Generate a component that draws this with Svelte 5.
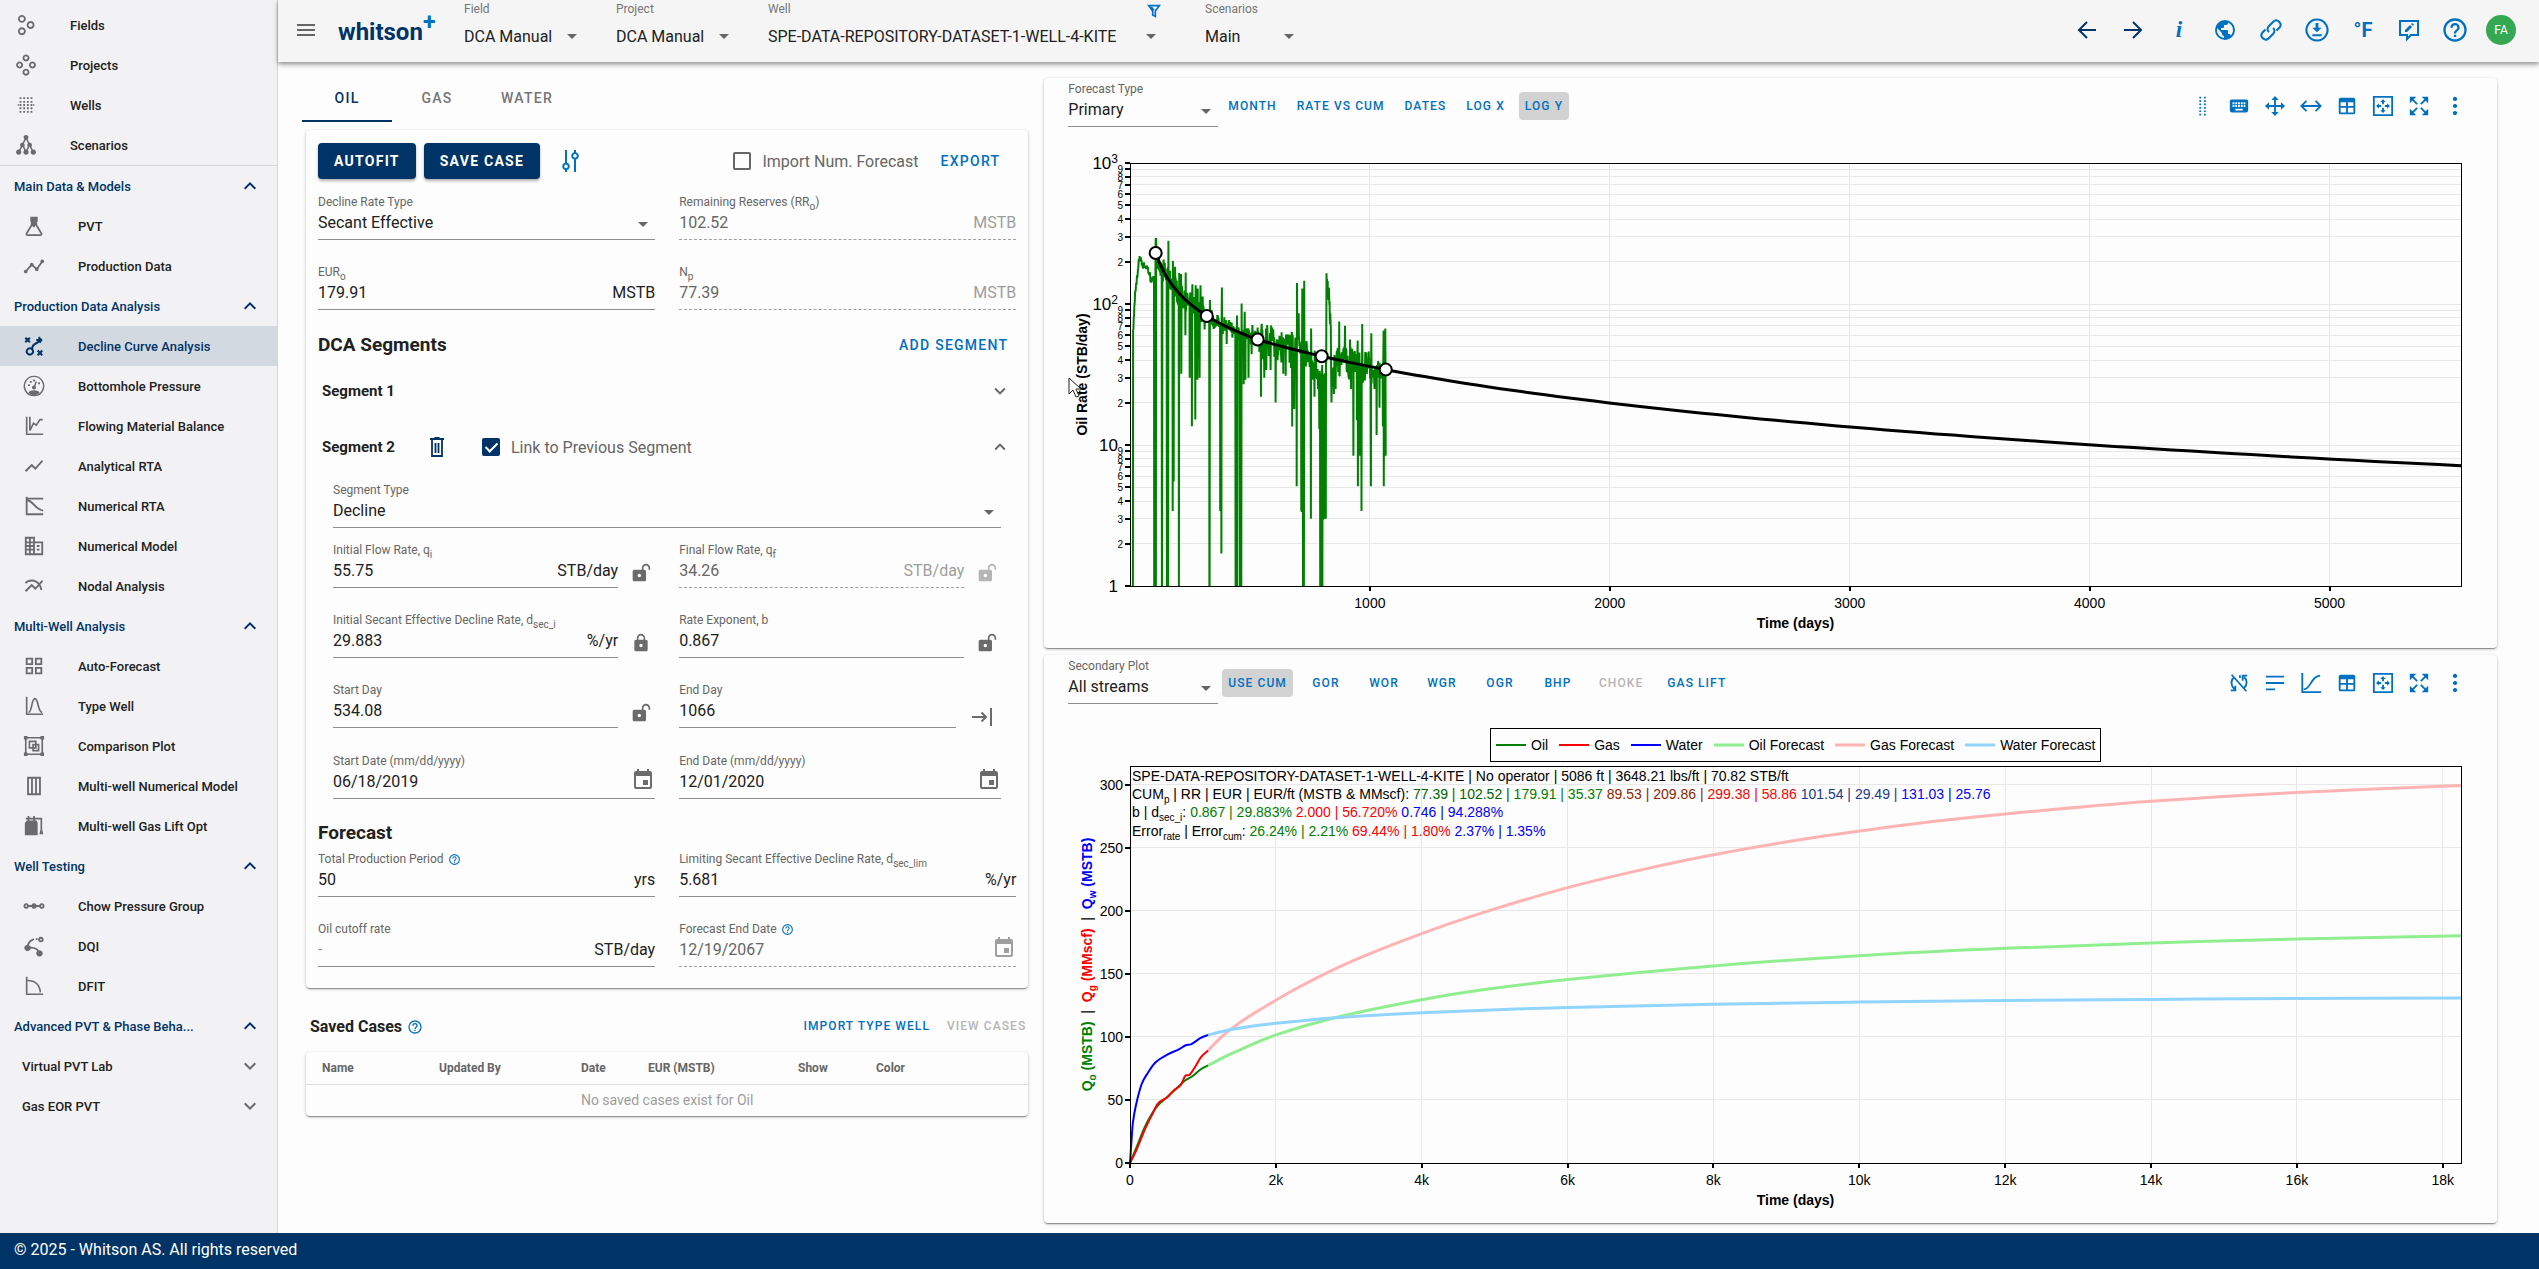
<script lang="ts">
	type Icon = { f?: string; s?: string; w?: number };
	type Field = {
		id: string;
		label: string;
		sub?: string;
		after?: string;
		value: string;
		unit?: string;
		disabled?: boolean;
		help?: boolean;
		icon?: string;
	};

	const frame = 'M4 2v19h18';

	const icons: Record<string, Icon> = {
		menu: { f: 'M3 6h18v2H3zM3 11h18v2H3zM3 16h18v2H3z' },
		up: { f: 'M7.41 15.41 12 10.83l4.59 4.58L18 14l-6-6-6 6z' },
		down: { f: 'M7.41 8.59 12 13.17l4.59-4.58L18 10l-6 6-6-6z' },
		caret: { f: 'M7 10l5 5 5-5z' },
		fields: { s: 'M7.5 2a3.3 3.3 0 1 0 .01 0M17 8.700a3.300 3.300 0 1 0 .01 0M7.500 15.500a3.300 3.300 0 1 0 .01 0', w: 2 },
		projects: { s: 'M12 1.500a2.800 2.800 0 1 0 .01 0M5 9.200a2.800 2.800 0 1 0 .01 0M19 9.200a2.800 2.800 0 1 0 .01 0M12 17a2.800 2.800 0 1 0 .01 0', w: 2 },
		wells: { s: 'M5 4.500h2m2 0h2m2 0h2m2 0h2M5 8.500h2m2 0h2m2 0h2m2 0h2M3 12h1m1 0h2m2 0h2m2 0h2m2 0h2m1 0h1M5 15.500h2m2 0h2m2 0h2m2 0h2M5 19.500h2m2 0h2m2 0h2m2 0h2', w: 2 },
		scenarios: {
			f: 'M12 1a2.600 2.600 0 1 0 .01 0M8 9.500a2.500 2.500 0 1 0 .01 0M16 9.500a2.500 2.500 0 1 0 .01 0M4 17a2.800 2.800 0 1 0 .01 0M12 17a2.800 2.800 0 1 0 .01 0M20 17a2.800 2.800 0 1 0 .01 0',
			s: 'M12 4 4 20M12 4l8 16M8.500 12 12 20M15.500 12 12 20',
			w: 1.6
		},
		pvt: { f: 'M8 2h8v5l-1 1h-.5v2L12 14l-3-3V8L8 7z', s: 'M9.500 8v3L4 20c-.4 1 0 2 1.200 2h13.600c1.200 0 1.600-1 1.200-2l-5.500-9V8', w: 2 },
		production: {
			f: 'M3 16a2 2 0 1 0 .01 0M9.500 8.500a2 2 0 1 0 .01 0M15 13.500a2 2 0 1 0 .01 0M21 5a2 2 0 1 0 .01 0',
			s: 'M3 18l6.500-7.500 5.500 5L21 7',
			w: 2
		},
		decline: {
			s: 'M2.500 3l5 5M7.500 3l-5 5M16 17l5 5M21 17l-5 5M7.500 14.500a3.500 3.500 0 1 0 .01 0M10 15.500c0-4 1-5 3.500-6s4-2 4.500-4M14.500 5.500h5.500M17 2.500l3 3-2 3',
			w: 2.200
		},
		gauge: {
			s: 'M12 1.500a10.500 10.500 0 1 0 .01 0M12 14l2.500-7',
			f: 'M6 19c2-3 10-3 12 0-3 4-9 4-12 0M12 11.500a2.200 2.200 0 1 0 .01 0M5.500 10h2v2h-2zM7.500 6.500h2v2h-2zM11 5h2v2h-2zM16.500 8h2v2h-2z',
			w: 1.600
		},
		fmb: { s: frame + 'M7.500 2v15M7.500 17l4-8 3 2 4-6h3', w: 1.800 },
		analytical: { f: 'M3.500 18.490l6-6.010 4 4L22 6.920l-1.410-1.410-7.090 7.970-4-4L2 16.990z' },
		numrta: { s: frame + 'M4 4h18M5 6c6 0 8 10 17 11', w: 2 },
		nummodel: { s: 'M3 3h9v18H3zM12 8h9v13h-9M3 8h9M3 12h9M3 16h9M7.500 3v18M15 12h3M15 16h3', w: 2 },
		nodal: {
			f: 'M22 6.920l-1.410-1.410-2.850 3.210C15.680 6.400 12.830 5 9.610 5 6.720 5 4.070 6.160 2 8l1.420 1.420C5.120 7.930 7.270 7 9.610 7c2.740 0 5.090 1.260 6.770 3.240l-2.880 3.240-4-4L2 16.990l1.500 1.500 6-6.010 4 4 4.050-4.550c.75 1.350 1.250 2.900 1.440 4.550H21c-.22-2.300-.95-4.390-2.040-6.140z'
		},
		auto: { s: 'M4 4h6v6H4zM14 4h6v6h-6zM4 14h6v6H4zM14 14h6v6h-6z', w: 2 },
		typewell: { s: frame + 'M6 19c4 0 3-15 7-15s3 15 8 15', w: 1.800 },
		comparison: { s: 'M3 3h18v18H3zM7 7h7v7H7zM11 10.500h6v6.500h-6z', f: 'M1 1h4v4H1zM19 1h4v4h-4zM1 19h4v4H1zM19 19h4v4h-4z', w: 1.800 },
		multinum: { s: 'M5.500 3h13v18h-13zM9.800 3v18M14.200 3v18', w: 2 },
		gaslift: { f: 'M2 9l2-3h11l1 3v13H2zM5 1h2v5H5zM11 1h2v5h-2z', s: 'M3 4h17v14M20 16l-1 4h2z', w: 1.800 },
		chow: { f: 'M12 9a3 3 0 1 0 .01 0', s: 'M3.500 10a2 2 0 1 0 .01 0M20.500 10a2 2 0 1 0 .01 0M5.500 12h13', w: 2 },
		dqi: { f: 'M5 10.500a3.500 3.500 0 1 0 .01 0M18 16.500a3.500 3.500 0 1 0 .01 0', s: 'M19.500 3a2 2 0 1 0 .01 0M5 12c1-4 4-6.500 7-7.500M14 4.500h2M6 14c7-1 10 1 12 6', w: 2 },
		dfit: { s: frame + 'M5 6c8 0 13 4 14 13', w: 1.800 },
		tune: { s: 'M8 1v13M8 14.500a2.800 2.800 0 1 0 .01 0M8 20v3M17 23V10M17 4a2.800 2.800 0 1 0 .01 0M17 1v3', w: 2 },
		trash: { f: 'M5 3h4l1-1h4l1 1h4v2H5z', s: 'M7 5v16h10V5M10.500 8v10M13.500 8v10', w: 1.800 },
		lock: {
			f: 'M12 17a2 2 0 0 0 2-2 2 2 0 0 0-2-2 2 2 0 0 0-2 2 2 2 0 0 0 2 2m6-9a2 2 0 0 1 2 2v10a2 2 0 0 1-2 2H6a2 2 0 0 1-2-2V10a2 2 0 0 1 2-2h1V6a5 5 0 0 1 5-5 5 5 0 0 1 5 5v2h1m-6-5a3 3 0 0 0-3 3v2h6V6a3 3 0 0 0-3-3Z'
		},
		unlock: {
			f: 'M18 1c-2.760 0-5 2.240-5 5v2H4c-1.100 0-2 .9-2 2v10c0 1.100.9 2 2 2h12c1.100 0 2-.9 2-2V10c0-1.100-.9-2-2-2h-1V6c0-1.660 1.340-3 3-3s3 1.340 3 3v2h2V6c0-2.760-2.240-5-5-5m-8 12c1.100 0 2 .9 2 2s-.9 2-2 2-2-.9-2-2 .9-2 2-2Z'
		},
		toend: { s: 'M1 12h14M10.500 7.500 15 12l-4.500 4.500M20 3v18', w: 2 },
		calendar: {
			f: 'M19 19H5V8h14m-3-7v2H8V1H6v2H5c-1.110 0-2 .89-2 2v14a2 2 0 0 0 2 2h14a2 2 0 0 0 2-2V5a2 2 0 0 0-2-2h-1V1m-1 11h-5v5h5v-5Z'
		},
		help: {
			f: 'M11 18h2v-2h-2v2m1-16A10 10 0 0 0 2 12a10 10 0 0 0 10 10 10 10 0 0 0 10-10A10 10 0 0 0 12 2m0 18c-4.410 0-8-3.590-8-8s3.590-8 8-8 8 3.590 8 8-3.590 8-8 8m0-14a4 4 0 0 0-4 4h2a2 2 0 0 1 2-2 2 2 0 0 1 2 2c0 2-3 1.750-3 5h2c0-2.250 3-2.500 3-5a4 4 0 0 0-4-4Z'
		},
		filter: { s: 'M4 4h16l-6 8v8l-4-2v-6zM8 6l4 5', w: 2.500 },
		back: { s: 'M21 12H4M12 4l-8 8 8 8', w: 2 },
		forward: { s: 'M3 12h17M12 4l8 8-8 8', w: 2 },
		globe: {
			f: 'M17.900 17.390C17.640 16.590 16.890 16 16 16h-1v-3a1 1 0 0 0-1-1H8v-2h2a1 1 0 0 0 1-1V7h2a2 2 0 0 0 2-2v-.41C17.930 5.770 20 8.640 20 12c0 2.080-.8 3.970-2.100 5.390M11 19.930C7.050 19.440 4 16.080 4 12c0-.62.08-1.220.21-1.790L9 15v1a2 2 0 0 0 2 2m1-16A10 10 0 0 0 2 12a10 10 0 0 0 10 10 10 10 0 0 0 10-10A10 10 0 0 0 12 2Z'
		},
		link: { s: 'M10 14c-2-1.500-2-4 0-6l4.500-4.500c3.500-3.500 9.500 2 6 6L17.500 12.500M14 10c2 1.500 2 4 0 6l-4.500 4.500c-3.500 3.500-9.500-2-6-6L6.500 11.500', w: 2 },
		download: { s: 'M12 3a9 9 0 1 0 .01 0M8 16.500h8', f: 'M10.800 6h2.400V10h2.800l-4 4-4-4h2.800z', w: 1.800 },
		feedback: { s: 'M3 3h18v14h-7l-4 4v-4H3z', f: 'M8 14v-2l5-5 2 2-5 5zM14 6l1.200-1 1.800 1.800-1 1.200z', w: 2 },
		drag: { s: 'M9 2v1.800m0 1.900v1.800m0 1.900v1.800m0 1.900v1.800m0 1.900v1.800m0 1.900v1.800M14 2v1.800m0 1.900v1.800m0 1.900v1.800m0 1.900v1.800m0 1.900v1.800m0 1.900v1.800', w: 2 },
		keyboard: {
			f: 'M19 10h-2V8h2m0 5h-2v-2h2m-3-1h-2V8h2m0 5h-2v-2h2m0 6H8v-2h8m-9-5H5V8h2m0 5H5v-2h2m1 0h2v2H8m0-5h2v2H8m3 1h2v2h-2m0-5h2v2h-2m9-5H4c-1.110 0-2 .89-2 2v10a2 2 0 0 0 2 2h16a2 2 0 0 0 2-2V7c0-1.110-.9-2-2-2Z'
		},
		move: { s: 'M12 3v18M3 12h18', f: 'M12 1l4 4.500H8zM12 23l4-4.500H8zM1 12l4.500-4v8zM23 12l-4.500-4v8z', w: 2 },
		wide: { s: 'M2 12h20M7 6.500 1.500 12 7 17.500M17 6.500l5.500 5.500-5.500 5.500', w: 2 },
		table: {
			f: 'M5 3h14a2 2 0 0 1 2 2v14a2 2 0 0 1-2 2H5a2 2 0 0 1-2-2V5a2 2 0 0 1 2-2m0 5v4h6V8H5m8 0v4h6V8h-6m-8 6v5h6v-5H5m8 0v5h6v-5h-6Z'
		},
		fit: { s: 'M2 2h20v20H2zM12 6v4M12 14v4M6 12h4M14 12h4', f: 'M12 4.500l3 3H9zM12 19.500l3-3H9zM4.500 12l3-3v6zM19.500 12l-3-3v6z', w: 2 },
		expand: { s: 'M4 4l6 6M20 4l-6 6M4 20l6-6M20 20l-6-6', f: 'M2 2h7L2 9zM22 2h-7l7 7zM2 22h7l-7-7zM22 22h-7l7-7z', w: 2 },
		dots: { f: 'M12 2a2.300 2.300 0 1 0 .01 0M12 9.700a2.300 2.300 0 1 0 .01 0M12 17.400a2.300 2.300 0 1 0 .01 0' },
		syncoff: { s: 'M4 3l16 18M6.500 6C2.500 9 3 15 7 18.500M3 20h5v-5M17.500 17.500c4-4 3.500-9 0-12M21 4h-5v5.500M13 3.500v3', w: 2 },
		lines: { s: 'M2 5h20M2 12h20M2 19h10', w: 2 },
		curve: { s: 'M2.500 1v21H23M4 19c8 0 8-15 18-15', w: 2 }
	};

	const topLinks = [
		['fields', 'Fields'],
		['projects', 'Projects'],
		['wells', 'Wells'],
		['scenarios', 'Scenarios']
	];

	const sections = [
		{ title: 'Main Data & Models', items: [['pvt', 'PVT'], ['production', 'Production Data']] },
		{
			title: 'Production Data Analysis',
			items: [
				['decline', 'Decline Curve Analysis'],
				['gauge', 'Bottomhole Pressure'],
				['fmb', 'Flowing Material Balance'],
				['analytical', 'Analytical RTA'],
				['numrta', 'Numerical RTA'],
				['nummodel', 'Numerical Model'],
				['nodal', 'Nodal Analysis']
			]
		},
		{
			title: 'Multi-Well Analysis',
			items: [
				['auto', 'Auto-Forecast'],
				['typewell', 'Type Well'],
				['comparison', 'Comparison Plot'],
				['multinum', 'Multi-well Numerical Model'],
				['gaslift', 'Multi-well Gas Lift Opt']
			]
		},
		{ title: 'Well Testing', items: [['chow', 'Chow Pressure Group'], ['dqi', 'DQI'], ['dfit', 'DFIT']] },
		{ title: 'Advanced PVT & Phase Beha...', items: [] }
	];

	const headerSelects = [
		{ id: 'h-field', label: 'Field', value: 'DCA Manual', size: 'normal' },
		{ id: 'h-project', label: 'Project', value: 'DCA Manual', size: 'normal' },
		{ id: 'h-well', label: 'Well', value: 'SPE-DATA-REPOSITORY-DATASET-1-WELL-4-KITE', size: 'long' },
		{ id: 'h-scenario', label: 'Scenarios', value: 'Main', size: 'short' }
	];

	const reserves: Field[] = [
		{ id: 'rr', label: 'Remaining Reserves (RR', sub: 'o', after: ')', value: '102.52', unit: 'MSTB', disabled: true },
		{ id: 'eur', label: 'EUR', sub: 'o', value: '179.91', unit: 'MSTB' },
		{ id: 'np', label: 'N', sub: 'p', value: '77.39', unit: 'MSTB', disabled: true }
	];

	const segmentFields: Field[] = [
		{ id: 'qi', label: 'Initial Flow Rate, q', sub: 'i', value: '55.75', unit: 'STB/day', icon: 'unlock' },
		{ id: 'qf', label: 'Final Flow Rate, q', sub: 'f', value: '34.26', unit: 'STB/day', icon: 'unlock', disabled: true },
		{ id: 'dsec', label: 'Initial Secant Effective Decline Rate, d', sub: 'sec_i', value: '29.883', unit: '%/yr', icon: 'lock' },
		{ id: 'b', label: 'Rate Exponent, b', value: '0.867', icon: 'unlock' },
		{ id: 'start', label: 'Start Day', value: '534.08', icon: 'unlock' },
		{ id: 'end', label: 'End Day', value: '1066', icon: 'toend' },
		{ id: 'startdate', label: 'Start Date (mm/dd/yyyy)', value: '06/18/2019', icon: 'calendar' },
		{ id: 'enddate', label: 'End Date (mm/dd/yyyy)', value: '12/01/2020', icon: 'calendar' }
	];

	const forecastFields: Field[] = [
		{ id: 'period', label: 'Total Production Period', value: '50', unit: 'yrs', help: true },
		{ id: 'dlim', label: 'Limiting Secant Effective Decline Rate, d', sub: 'sec_lim', value: '5.681', unit: '%/yr' },
		{ id: 'cutoff', label: 'Oil cutoff rate', value: '', unit: 'STB/day' },
		{ id: 'endforecast', label: 'Forecast End Date', value: '12/19/2067', help: true, icon: 'calendar', disabled: true }
	];

	const rateButtons = ['MONTH', 'RATE VS CUM', 'DATES', 'LOG X', 'LOG Y'];
	const streamButtons = ['USE CUM', 'GOR', 'WOR', 'WGR', 'OGR', 'BHP', 'CHOKE', 'GAS LIFT'];
	const rateTools = ['drag', 'keyboard', 'move', 'wide', 'table', 'fit', 'expand', 'dots'];
	const streamTools = ['syncoff', 'lines', 'curve', 'table', 'fit', 'expand', 'dots'];

	let chartWidth = $state(1453);
	let linked = $state(true);
	let importNum = $state(false);

	const left = 86;
	let right = $derived(chartWidth - 36);

	// primary plot: log rate vs time
	const top1 = 28;
	const bottom1 = 451;
	const x1 = (day: number) => left + (day / 5548) * (right - left);
	const y1 = (rate: number) => bottom1 - (Math.log10(Math.max(rate, 1)) / 3) * (bottom1 - top1);

	function arps(day: number) {
		if (day < 534) return 230 / Math.pow(1 + 0.01724 * (day - 107), 1 / 1.5);
		return 55.75 / Math.pow(1 + 0.000987 * (day - 534), 1 / 0.867);
	}

	const startup = [[12, 1], [13, 63], [22, 119], [33, 165], [38, 205], [44, 215], [50, 199], [67, 184], [78, 162], [99, 145], [107, 150]];

	const shutins = [101, 102, 108, 133, 134, 154, 156, 159, 204, 331, 332, 440, 442, 444, 447, 458, 460, 464, 721, 723, 725, 793, 795, 797, 799, 802];

	const outliers: Record<number, number> = {
		107: 294, 109: 294, 160: 281, 178: 3.4, 179: 202, 182: 5.5, 188: 184, 205: 166, 213: 163, 214: 32,
		231: 60, 232: 167, 249: 30, 251: 119, 258: 13.6, 260: 138, 272: 15.2, 274: 136, 281: 29,
		282: 129, 290: 30, 294: 136, 303: 113, 311: 66, 333: 107, 376: 3.4, 378: 3.4, 381: 1.7, 383: 131, 403: 52,
		446: 83, 465: 101, 474: 27, 478: 88, 481: 29, 494: 30, 507: 44, 510: 71, 546: 22, 560: 30, 568: 34,
		586: 34, 597: 66, 607: 20, 615: 40, 632: 63, 639: 32, 649: 31, 668: 60, 676: 13.5, 685: 18,
		689: 58, 695: 5.1, 696: 141, 703: 86, 714: 3.4, 715: 3.4, 718: 129, 726: 146, 754: 3, 755: 67, 762: 29,
		769: 22, 789: 13, 801: 37, 807: 3, 808: 3, 810: 27, 812: 3, 814: 3, 816: 3, 819: 165, 826: 118, 835: 86,
		840: 20, 850: 23, 857: 25, 868: 33, 872: 75, 896: 70, 917: 56, 921: 25, 931: 8.4, 946: 15,
		949: 55, 950: 5.1, 958: 8.4, 960: 8.4, 965: 3.4, 968: 72, 1004: 5.1, 1006: 62, 1019: 25, 1028: 11.8,
		1040: 18.4, 1054: 13.5, 1057: 65, 1058: 5.1, 1062: 8.4, 1064: 67, 1066: 8.4
	};

	function trend(day: number) {
		if (day < 107) {
			const i = startup.findIndex((p) => p[0] > day);
			const [a, b] = [startup[i - 1], startup[i]];
			return a[1] + ((b[1] - a[1]) * (day - a[0])) / (b[0] - a[0]);
		}
		if (day > 755 && day < 817) return 42 - (day - 755) * 0.28;
		if (day > 696 && day < 712) return 80 - (day - 696) * 2;
		if (day > 818 && day < 838) return 150 - (day - 818) * 4.5;
		if (day > 838 && day < 866) return 30 + (day - 838) * 0.3;
		return arps(day);
	}

	let seed = 7;
	function noise() {
		seed = (seed * 16807) % 2147483647;
		return (seed / 2147483647) * 2 - 1;
	}

	const history: number[][] = [];
	let drift = 0;
	for (let day = 12; day <= 1066; day++) {
		const spread = day < 107 ? 0.05 : day < 300 ? 0.16 : day < 520 ? 0.11 : 0.14;
		if (day % 7 === 0) drift = day < 520 ? noise() * 0.05 : noise() * 0.18;
		let rate = trend(day) * Math.exp(drift + noise() * spread);
		if (outliers[day]) rate = outliers[day];
		if (day === 12 || shutins.includes(day)) rate = 1;
		history.push([day, rate]);
	}

	const fitDays = Array.from({ length: 120 }, (_, i) => 107 + (5548 - 107) * Math.pow(i / 119, 2));
	const handles = [107, 320, 532, 799, 1066];

	const decades = [1, 10, 100];
	const logTicks = decades.flatMap((d) => [2, 3, 4, 5, 6, 7, 8, 9].map((n) => [n, n * d]));

	const line = (pts: number[][], x: (n: number) => number, y: (n: number) => number) =>
		pts.map((p, i) => (i ? 'L' : 'M') + x(p[0]).toFixed(1) + ' ' + y(p[1]).toFixed(1)).join('');

	// secondary plot: cumulatives
	const top2 = 4;
	const bottom2 = 401;
	const x2 = (day: number) => left + (day / 18250) * (right - left);
	const y2 = (cum: number) => bottom2 - (cum / 315) * (bottom2 - top2);

	const streams = [
		{
			name: 'Gas Forecast', color: '#ffb3b3', width: 3,
			points: [[1069, 89.2], [1262, 100.4], [1494, 111], [1826, 123.2], [2357, 140.8], [3022, 159.6], [4000, 182], [4914, 200], [6000, 218.5], [7039, 233], [8000, 244.6], [9184, 256.5], [10000, 263.4], [10960, 270.6], [12000, 277], [14000, 287], [16000, 294], [18250, 299.5]]
		},
		{
			name: 'Oil Forecast', color: '#90ee90', width: 3,
			points: [[1069, 77.4], [1428, 87.7], [2000, 101.6], [2822, 115.5], [4000, 129.6], [4914, 138], [6000, 145.6], [8000, 156.4], [10000, 164.5], [12000, 170.3], [14000, 174.5], [16000, 177.7], [18250, 180.3]]
		},
		{
			name: 'Water Forecast', color: '#90d5ff', width: 3,
			points: [[1069, 101.5], [1428, 106.3], [2000, 110.8], [2822, 115.3], [4000, 119.3], [6000, 123.4], [8000, 126], [10000, 127.7], [12000, 129], [14000, 129.8], [16000, 130.5], [18250, 131]]
		},
		{
			name: 'Oil', color: '#008000', width: 2,
			points: [[0, 0], [86, 12], [199, 28], [290, 38], [385, 45.8], [531, 53.4], [697, 62.5], [757, 65.5], [860, 69], [976, 74.6], [1069, 77.4]]
		},
		{
			name: 'Gas', color: '#ff0000', width: 2,
			points: [[0, 0], [86, 10], [199, 26], [300, 38], [385, 47.3], [511, 52.2], [600, 57.5], [697, 62], [757, 69.2], [817, 70], [900, 77], [976, 84.3], [1069, 89.2]]
		},
		{
			name: 'Water', color: '#0000ff', width: 2,
			points: [[0, 0], [20, 17], [40, 32], [80, 45.5], [159, 62.5], [246, 71.6], [352, 80], [511, 86], [664, 90], [764, 93.4], [843, 94.4], [970, 99.2], [1069, 101.6]]
		}
	];
	const legend = ['Oil', 'Gas', 'Water', 'Oil Forecast', 'Gas Forecast', 'Water Forecast'].map(
		(n) => streams.find((s) => s.name === n)!
	);

	function smooth(pts: number[][]) {
		const p = pts.map((q) => [x2(q[0]), y2(q[1])]);
		let d = `M${p[0][0]} ${p[0][1]}`;
		for (let i = 0; i < p.length - 1; i++) {
			const a = p[i - 1] ?? p[i];
			const b = p[i];
			const c = p[i + 1];
			const e = p[i + 2] ?? c;
			d += `C${b[0] + (c[0] - a[0]) / 6} ${b[1] + (c[1] - a[1]) / 6} ${c[0] - (e[0] - b[0]) / 6} ${c[1] - (e[1] - b[1]) / 6} ${c[0]} ${c[1]}`;
		}
		return d;
	}
</script>

{#snippet icon(name: string, size = 24)}
	<svg class="icon" viewBox="0 0 24 24" width={size} height={size} aria-hidden="true">
		{#if icons[name].s}
			<path d={icons[name].s} fill="none" stroke="currentColor" stroke-width={icons[name].w} />
		{/if}
		{#if icons[name].f}
			<path d={icons[name].f} fill="currentColor" />
		{/if}
	</svg>
{/snippet}

{#snippet selectField(id: string, label: string, value: string)}
	<div class="field">
		<label for={id}>{label}</label>
		<div class="control">
			<select {id}><option>{value}</option></select>
			<span class="caret">{@render icon('caret')}</span>
		</div>
	</div>
{/snippet}

{#snippet textField(f: Field)}
	<div class="field-row">
		<div class="field" class:disabled={f.disabled}>
			<label for={f.id}>
				{f.label}{#if f.sub}<sub>{f.sub}</sub>{/if}{f.after ?? ''}
				{#if f.help}<span class="help">{@render icon('help', 13)}</span>{/if}
			</label>
			<div class="control">
				<input id={f.id} type="text" value={f.value} placeholder="-" disabled={f.disabled} />
				{#if f.unit}<span class="unit">{f.unit}</span>{/if}
				{#if f.icon === 'calendar'}
					<button class="calendar" aria-label="Pick date">{@render icon('calendar')}</button>
				{/if}
			</div>
		</div>
		{#if f.icon && f.icon !== 'calendar'}
			<button class="lock" class:wide={f.icon === 'toend'} disabled={f.disabled} aria-label={f.icon}>
				{@render icon(f.icon, f.icon === 'toend' ? 24 : 20)}
			</button>
		{/if}
	</div>
{/snippet}

{#snippet tools(names: string[])}
	<div class="tools">
		{#each names as name}
			<button aria-label={name}>{@render icon(name, 22)}</button>
		{/each}
	</div>
{/snippet}

<div class="app">
	<div class="body">
		<nav class="sidebar">
			<div class="top-links">
				{#each topLinks as [glyph, text]}
					<a href="#{glyph}"><span class="glyph">{@render icon(glyph, 22)}</span>{text}</a>
				{/each}
			</div>
			{#each sections as section}
				<button class="section">
					<span>{section.title}</span>
					{@render icon('up', 24)}
				</button>
				{#each section.items as [glyph, text]}
					<a class="sub-link" class:active={glyph === 'decline'} href="#{glyph}">
						<span class="glyph">{@render icon(glyph, 22)}</span>{text}
					</a>
				{/each}
			{/each}
			<button class="section nested"><span>Virtual PVT Lab</span>{@render icon('down', 24)}</button>
			<button class="section nested"><span>Gas EOR PVT</span>{@render icon('down', 24)}</button>
		</nav>

		<div class="page">
			<header>
				<button class="burger" aria-label="Menu">{@render icon('menu')}</button>
				<a class="logo" href="#home">whitson<sup>+</sup></a>
				{#each headerSelects as s}
					<div class="picker {s.size}">
						<label for={s.id}>{s.label}</label>
						<select id={s.id}><option>{s.value}</option></select>
						<span class="caret">{@render icon('caret')}</span>
						{#if s.size === 'long'}
							<button class="filter" aria-label="Filter">{@render icon('filter', 16)}</button>
						{/if}
					</div>
				{/each}
				<div class="actions">
					<button class="dark" aria-label="Back">{@render icon('back')}</button>
					<button class="dark" aria-label="Forward">{@render icon('forward')}</button>
					<button class="info">i</button>
					<button aria-label="Language">{@render icon('globe')}</button>
					<button aria-label="Copy link">{@render icon('link')}</button>
					<button aria-label="Download">{@render icon('download', 28)}</button>
					<button class="unit-toggle">°F</button>
					<button aria-label="Feedback">{@render icon('feedback')}</button>
					<button aria-label="Help">{@render icon('help', 28)}</button>
					<button><span class="avatar">FA</span></button>
				</div>
			</header>

			<main>
				<div class="inputs">
					<div class="tabs" role="tablist">
						<button role="tab" aria-selected="true" class="selected">OIL</button>
						<button role="tab" aria-selected="false">GAS</button>
						<button role="tab" aria-selected="false">WATER</button>
					</div>

					<section class="card form">
						<div class="toolbar">
							<button class="primary">AUTOFIT</button>
							<button class="primary">SAVE CASE</button>
							<button class="tune" aria-label="Settings">{@render icon('tune')}</button>
							<label class="check">
								<input type="checkbox" bind:checked={importNum} />
								Import Num. Forecast
							</label>
							<button class="text">EXPORT</button>
						</div>

						<div class="grid">
							{@render selectField('decline-type', 'Decline Rate Type', 'Secant Effective')}
							{#each reserves as f}
								{@render textField(f)}
							{/each}
						</div>

						<div class="heading">
							<h2>DCA Segments</h2>
							<button class="text">ADD SEGMENT</button>
						</div>

						<div class="segment">
							<h3>Segment 1</h3>
							<button class="toggle" aria-label="Expand segment 1">{@render icon('down', 22)}</button>
						</div>
						<div class="segment">
							<h3>Segment 2</h3>
							<button class="trash" aria-label="Delete segment">{@render icon('trash')}</button>
							<label class="check">
								<input type="checkbox" bind:checked={linked} />
								Link to Previous Segment
							</label>
							<button class="toggle" aria-label="Collapse segment 2">{@render icon('up', 22)}</button>
						</div>

						<div class="segment-body">
							{@render selectField('segment-type', 'Segment Type', 'Decline')}
							<div class="grid">
								{#each segmentFields as f}
									{@render textField(f)}
								{/each}
							</div>
						</div>

						<h2 class="forecast-title">Forecast</h2>
						<div class="grid">
							{#each forecastFields as f}
								{@render textField(f)}
							{/each}
						</div>
					</section>

					<div class="saved">
						<h3>Saved Cases</h3>
						<span class="help">{@render icon('help', 16)}</span>
						<button class="text small">IMPORT TYPE WELL</button>
						<button class="text small" disabled>VIEW CASES</button>
					</div>
					<div class="card">
						<table>
							<thead>
								<tr>
									<th class="name">Name</th>
									<th class="by">Updated By</th>
									<th class="date">Date</th>
									<th class="eur">EUR (MSTB)</th>
									<th class="show">Show</th>
									<th>Color</th>
								</tr>
							</thead>
							<tbody>
								<tr><td colspan="6">No saved cases exist for Oil</td></tr>
							</tbody>
						</table>
					</div>
				</div>

				<div class="charts">
					<section class="card">
						<div class="chart-head">
							{@render selectField('forecast-type', 'Forecast Type', 'Primary')}
							<div class="options">
								{#each rateButtons as text}
									<button class:on={text === 'LOG Y'}>{text}</button>
								{/each}
							</div>
							{@render tools(rateTools)}
						</div>
						<div bind:clientWidth={chartWidth}>
							<svg class="chart" width={chartWidth} height="505">
								<g class="gridlines">
									{#each [1000, 2000, 3000, 4000, 5000] as t}
										<line x1={x1(t)} x2={x1(t)} y1={top1} y2={bottom1} />
									{/each}
									{#each logTicks as [, v]}
										<line x1={left} x2={right} y1={y1(v)} y2={y1(v)} />
									{/each}
									{#each [10, 100] as v}
										<line x1={left} x2={right} y1={y1(v)} y2={y1(v)} />
									{/each}
								</g>
								<g class="ticks">
									{#each [1000, 2000, 3000, 4000, 5000] as t}
										<line x1={x1(t)} x2={x1(t)} y1={bottom1} y2={bottom1 + 5} />
									{/each}
									{#each [...logTicks.map((t) => t[1]), 1, 10, 100, 1000] as v}
										<line x1={left - 5} x2={left} y1={y1(v)} y2={y1(v)} />
									{/each}
								</g>
								<path d={line(history, x1, y1)} fill="none" stroke="#008000" stroke-width="2" stroke-linejoin="bevel" />
								<path
									d={line(fitDays.map((d) => [d, arps(d)]), x1, y1)}
									fill="none"
									stroke="#000"
									stroke-width="3"
								/>
								{#each handles as day}
									<circle cx={x1(day)} cy={y1(arps(day))} r="6" fill="#fff" stroke="#000" stroke-width="2" />
								{/each}
								<rect class="frame" x={left} y={top1} width={right - left} height={bottom1 - top1} />
								{#each [1000, 2000, 3000, 4000, 5000] as t}
									<text x={x1(t)} y={bottom1 + 22} text-anchor="middle">{t}</text>
								{/each}
								{#each logTicks as [n, v]}
									<text class="minor" x={left - 7} y={y1(v) + 4} text-anchor="end">{n}</text>
								{/each}
								<g class="power">
									<text x={left - 12} y={y1(1) + 6} text-anchor="end">1</text>
									<text x={left - 12} y={y1(10) + 6} text-anchor="end">10</text>
									<text x={left - 12} y={y1(100) + 6} text-anchor="end">10<tspan class="sup" dy="-6">2</tspan></text>
									<text x={left - 12} y={y1(1000) + 6} text-anchor="end">10<tspan class="sup" dy="-6">3</tspan></text>
								</g>
								<text class="title" x={(left + right) / 2} y={bottom1 + 42} text-anchor="middle">Time (days)</text>
								<text class="title" transform="translate(43 {(top1 + bottom1) / 2}) rotate(-90)" text-anchor="middle">Oil Rate (STB/day)</text>
								<path d="M25 243v16l4-4 3 7 3-1-3-7h5z" fill="#fff" fill-opacity="0.6" stroke="#222" />
							</svg>
						</div>
					</section>

					<section class="card">
						<div class="chart-head">
							{@render selectField('secondary-plot', 'Secondary Plot', 'All streams')}
							<div class="options roomy">
								{#each streamButtons as text}
									<button class:on={text === 'USE CUM'} disabled={text === 'CHOKE'}>{text}</button>
								{/each}
							</div>
							{@render tools(streamTools)}
						</div>
						<div class="legend-wrap">
							<div class="legend">
								{#each legend as s}
									<span>
										<svg width="30" height="4"><line x2="30" y1="2" y2="2" stroke={s.color} stroke-width={s.width} /></svg>
										{s.name}
									</span>
								{/each}
							</div>
						</div>
						<svg class="chart" width={chartWidth} height="453">
							<g class="gridlines">
								{#each [2, 4, 6, 8, 10, 12, 14, 16, 18] as k}
									<line x1={x2(k * 1000)} x2={x2(k * 1000)} y1={top2} y2={bottom2} />
								{/each}
								{#each [50, 100, 150, 200, 250, 300] as v}
									<line x1={left} x2={right} y1={y2(v)} y2={y2(v)} />
								{/each}
							</g>
							<g class="ticks">
								{#each [0, 2, 4, 6, 8, 10, 12, 14, 16, 18] as k}
									<line x1={x2(k * 1000)} x2={x2(k * 1000)} y1={bottom2} y2={bottom2 + 5} />
								{/each}
								{#each [0, 50, 100, 150, 200, 250, 300] as v}
									<line x1={left - 5} x2={left} y1={y2(v)} y2={y2(v)} />
								{/each}
							</g>
							{#each streams as s}
								<path d={smooth(s.points)} fill="none" stroke={s.color} stroke-width={s.width} />
							{/each}
							<rect class="frame" x={left} y={top2} width={right - left} height={bottom2 - top2} />
							{#each [0, 2, 4, 6, 8, 10, 12, 14, 16, 18] as k}
								<text x={x2(k * 1000)} y={bottom2 + 22} text-anchor="middle">{k ? k + 'k' : 0}</text>
							{/each}
							{#each [0, 50, 100, 150, 200, 250, 300] as v}
								<text x={left - 7} y={y2(v) + 5} text-anchor="end">{v}</text>
							{/each}
							<text x={left + 2} y="19">SPE-DATA-REPOSITORY-DATASET-1-WELL-4-KITE | No operator | 5086 ft | 3648.21 lbs/ft | 70.82 STB/ft</text>
							<text x={left + 2} y="37">CUM<tspan class="sub" dy="4">p</tspan><tspan dy="-4">{' | RR | EUR | EUR/ft (MSTB & MMscf): '}</tspan><tspan class="dark-green">{'77.39 | 102.52 | '}</tspan><tspan class="green">{'179.91 | 35.37 '}</tspan><tspan class="brown">{'89.53 | 209.86 | '}</tspan><tspan class="red">{'299.38 | 58.86 '}</tspan><tspan class="navy">{'101.54 | 29.49 | '}</tspan><tspan class="blue">131.03 | 25.76</tspan></text>
							<text x={left + 2} y="55">b | d<tspan class="sub" dy="4">sec_i</tspan><tspan dy="-4">{': '}</tspan><tspan class="green">{'0.867 | 29.883% '}</tspan><tspan class="red">{'2.000 | 56.720% '}</tspan><tspan class="blue">0.746 | 94.288%</tspan></text>
							<text x={left + 2} y="74">Error<tspan class="sub" dy="4">rate</tspan><tspan dy="-4">{' | Error'}</tspan><tspan class="sub" dy="4">cum</tspan><tspan dy="-4">{': '}</tspan><tspan class="green">{'26.24% | 2.21% '}</tspan><tspan class="red">{'69.44% | 1.80% '}</tspan><tspan class="blue">2.37% | 1.35%</tspan></text>
							<text class="title" x={(left + right) / 2} y={bottom2 + 42} text-anchor="middle">Time (days)</text>
							<text class="title" transform="translate(48 {(top2 + bottom2) / 2}) rotate(-90)" text-anchor="middle"><tspan class="green">Q</tspan><tspan class="sub green" dy="4">o</tspan><tspan class="green" dy="-4">{' (MSTB)'}</tspan><tspan class="pipe">{'  |  '}</tspan><tspan class="red">Q</tspan><tspan class="sub red" dy="4">g</tspan><tspan class="red" dy="-4">{' (MMscf)'}</tspan><tspan class="pipe">{'  |  '}</tspan><tspan class="blue">Q</tspan><tspan class="sub blue" dy="4">w</tspan><tspan class="blue" dy="-4">{' (MSTB)'}</tspan></text>
						</svg>
					</section>
				</div>
			</main>
		</div>
	</div>
	<footer>© 2025 - Whitson AS. All rights reserved</footer>
</div>

<style>
	:global(body) {
		background: #fdfdfd;
	}

	.app {
		display: flex;
		flex-direction: column;
		min-height: 100vh;
		font-family: Roboto, 'Liberation Sans', sans-serif;
		font-size: 16px;
		color: #212121;
	}

	.app * {
		box-sizing: border-box;
	}

	.body {
		display: flex;
		flex: 1;
	}

	button,
	input,
	select {
		font: inherit;
		color: inherit;
		border: 0;
		padding: 0;
		margin: 0;
		background: none;
		appearance: none;
	}

	button {
		cursor: pointer;
	}

	.icon {
		display: block;
		flex: none;
	}

	a {
		color: inherit;
		text-decoration: none;
	}

	.sidebar {
		flex: none;
		width: 278px;
		background: #f2f2f5;
		border-right: 1px solid #d5d5d8;
		font-size: 13px;
		font-weight: 500;
	}

	.top-links {
		padding-top: 5px;
		border-bottom: 1px solid #d5d5d8;
	}

	.sidebar a {
		display: flex;
		align-items: center;
		height: 40px;
		padding-left: 15px;
	}

	.sidebar a.sub-link {
		padding-left: 23px;
	}

	.glyph {
		width: 55px;
		color: #6b6b6e;
	}

	.sidebar a.active,
	.active .glyph {
		background: #d3d9e1;
		color: #003366;
	}

	.section {
		display: flex;
		align-items: center;
		justify-content: space-between;
		width: 100%;
		height: 40px;
		padding: 0 15px 0 14px;
		color: #003366;
		white-space: nowrap;
	}

	.nested {
		padding-left: 22px;
		color: #212121;
	}

	.nested .icon {
		color: #6b6b6e;
	}

	.page {
		flex: 1;
		min-width: 0;
	}

	header {
		display: flex;
		align-items: center;
		height: 62px;
		padding: 0 15px 2px 16px;
		background: #f5f5f5;
		box-shadow: 0 2px 4px rgba(0, 0, 0, 0.35), 0 4px 6px rgba(0, 0, 0, 0.1);
	}

	.burger {
		color: #666;
		margin-right: 20px;
	}

	.logo {
		width: 126px;
		padding-top: 3px;
		color: #003366;
		font-size: 24px;
		font-weight: 700;
	}

	.logo sup {
		color: #0070c0;
		font-size: 23px;
		line-height: 0;
		vertical-align: 10px;
	}

	.picker {
		position: relative;
		align-self: flex-start;
		width: 120px;
		margin-right: 32px;
	}

	.picker.long {
		width: 395px;
		margin-right: 42px;
	}

	.picker.short {
		width: 96px;
	}

	.picker label {
		display: block;
		height: 20px;
		font-size: 12px;
		line-height: 18px;
		color: #757575;
	}

	.picker select {
		display: block;
		width: 100%;
		height: 32px;
	}

	.caret {
		position: absolute;
		right: 0;
		bottom: 4px;
		color: #666;
		pointer-events: none;
	}

	.filter {
		position: absolute;
		top: 3px;
		right: 1px;
		color: #0070c0;
	}

	.actions {
		display: flex;
		align-items: center;
		margin-left: auto;
		color: #0070c0;
	}

	.actions button {
		display: flex;
		align-items: center;
		justify-content: center;
		width: 46px;
		height: 46px;
	}

	.actions .dark {
		color: #003366;
	}

	.actions .info {
		font-family: 'Liberation Serif', serif;
		font-size: 23px;
		font-style: italic;
		font-weight: 700;
	}

	.actions .unit-toggle {
		font-size: 20px;
		font-weight: 700;
	}

	.avatar {
		width: 30px;
		height: 30px;
		border-radius: 50%;
		background: #34a853;
		color: #fff;
		font-size: 12px;
		line-height: 30px;
	}

	main {
		display: grid;
		grid-template-columns: minmax(0, 1fr) minmax(0, 2fr);
		gap: 16px;
		padding: 12px 42px 10px 24px;
	}

	.card {
		background: #fdfdfd;
		border-radius: 4px;
		box-shadow: 0 1px 3px rgba(0, 0, 0, 0.3), 0 2px 1px -1px rgba(0, 0, 0, 0.3);
	}

	.inputs .card {
		margin-left: 4px;
	}

	.tabs {
		display: flex;
		height: 48px;
		margin-bottom: 8px;
		font-size: 14px;
		font-weight: 500;
		letter-spacing: 0.09em;
		color: #757575;
	}

	.tabs button {
		min-width: 90px;
		padding-top: 2px;
		border-bottom: 2px solid transparent;
		letter-spacing: inherit;
	}

	.tabs .selected {
		color: #003366;
		border-color: #003366;
	}

	.form {
		padding: 13px 12px 21px;
	}

	.toolbar {
		display: flex;
		align-items: center;
		gap: 8px;
		height: 36px;
		margin-bottom: 13px;
	}

	.primary {
		height: 36px;
		padding: 0 16px;
		border-radius: 4px;
		background: #003366;
		color: #fff;
		font-size: 14px;
		font-weight: 700;
		letter-spacing: 0.09em;
		box-shadow: 0 2px 3px rgba(0, 0, 0, 0.3);
	}

	.tune {
		margin: 0 auto 0 10px;
		color: #0070c0;
	}

	.check {
		display: flex;
		align-items: center;
		gap: 11px;
		color: #666;
	}

	.check input {
		width: 18px;
		height: 18px;
		border: 2px solid #666;
		border-radius: 2px;
	}

	.check input:checked {
		border-color: #003366;
		background: #003366;
		display: grid;
		place-items: center;
	}

	.check input:checked::after {
		content: '';
		width: 5px;
		height: 10px;
		margin-bottom: 3px;
		border: solid #fff;
		border-width: 0 2px 2px 0;
		transform: rotate(45deg);
	}

	.text {
		color: #0070c0;
		font-size: 14px;
		font-weight: 500;
		letter-spacing: 0.09em;
	}

	.toolbar .text {
		margin: 0 16px 0 14px;
	}

	.text.small {
		font-size: 12px;
	}

	.text:disabled {
		color: #b5b5b5;
	}

	.grid {
		display: grid;
		grid-template-columns: 1fr 1fr;
		gap: 22px 24px;
	}

	.field-row {
		display: flex;
		min-width: 0;
	}

	.field {
		flex: 1;
		min-width: 0;
	}

	.field label {
		display: flex;
		height: 20px;
		align-items: baseline;
		font-size: 12px;
		line-height: 20px;
		color: #666;
		white-space: nowrap;
	}

	sub {
		font-size: 10px;
		line-height: 0;
		position: relative;
		top: 4px;
	}

	.help {
		align-self: center;
		margin-left: 4px;
		color: #0070c0;
	}

	.control {
		position: relative;
		display: flex;
		height: 28px;
		padding: 1px 0 6px;
		border-bottom: 1px solid #8c8c8c;
	}

	.control input,
	.control select {
		flex: 1;
		width: 100%;
		min-width: 0;
		line-height: 20px;
	}

	.control input::placeholder {
		color: #999;
	}

	.control .caret {
		bottom: 3px;
	}

	.unit {
		line-height: 20px;
	}

	.disabled .control {
		border-bottom-style: dashed;
		border-color: #a0a0a0;
		color: #666;
	}

	.disabled .unit {
		color: #9e9e9e;
	}

	.calendar {
		align-self: flex-end;
		height: 24px;
		color: #6b6b6b;
	}

	.disabled .calendar {
		color: #9e9e9e;
	}

	.lock {
		display: flex;
		justify-content: center;
		width: 37px;
		padding: 23px 0 0 9px;
		color: #6b6b6b;
	}

	.lock.wide {
		width: 45px;
		padding-top: 25px;
	}

	.lock:disabled {
		color: #b5b5b5;
	}

	h2,
	h3 {
		margin: 0;
		font-weight: 700;
	}

	h2 {
		font-size: 19px;
		line-height: 32px;
	}

	h3 {
		font-size: 16px;
	}

	.heading {
		display: flex;
		justify-content: space-between;
		margin: 19px 8px 2px 0;
	}

	.segment {
		display: flex;
		align-items: center;
		height: 56px;
		padding: 0 5px 0 4px;
	}

	.segment h3 {
		width: 103px;
		font-size: 15px;
	}

	.trash {
		margin-right: 33px;
		color: #003366;
	}

	.toggle {
		margin-left: auto;
		color: #666;
	}

	.segment-body {
		display: grid;
		gap: 12px;
		padding: 5px 15px 0;
	}

	.forecast-title {
		margin-top: 18px;
	}

	.saved {
		display: flex;
		align-items: center;
		height: 32px;
		margin: 22px 2px 10px 8px;
	}

	.saved .help {
		margin: 2px auto 0 5px;
	}

	.saved .text {
		margin-left: 17px;
	}

	table {
		width: 100%;
		border-collapse: collapse;
		table-layout: fixed;
		font-size: 12px;
	}

	th {
		height: 32px;
		padding: 0 0 0 16px;
		border-bottom: 1px solid #dcdcdc;
		text-align: left;
		font-weight: 700;
		color: #666;
	}

	td {
		height: 32px;
		padding: 0;
		text-align: center;
		font-size: 14px;
		color: #9e9e9e;
	}

	.name {
		width: 117px;
	}

	.by {
		width: 142px;
	}

	.date {
		width: 67px;
	}

	.eur {
		width: 150px;
	}

	.show {
		width: 78px;
	}

	.charts {
		padding-top: 4px;
	}

	.charts .card {
		padding-bottom: 8px;
	}

	.charts .card + .card {
		margin-top: 7px;
	}

	.chart-head {
		display: flex;
		align-items: flex-start;
		height: 57px;
		padding: 1px 24px 0;
	}

	.chart-head .field {
		flex: none;
		width: 150px;
	}

	.options {
		display: flex;
		gap: 8px;
		margin: 13px auto 0 4px;
		color: #0070c0;
		font-size: 12px;
		font-weight: 500;
	}

	.options button {
		min-width: 50px;
		height: 28px;
		padding: 0 6px;
		border-radius: 4px;
		letter-spacing: 0.09em;
	}

	.roomy button:not(.on) {
		padding: 0 8px;
	}

	.options .on {
		background: #d2d2d2;
	}

	.options button:disabled {
		color: #b5b5b5;
	}

	.tools {
		display: flex;
		margin-top: 9px;
		color: #0070c0;
	}

	.tools button {
		display: flex;
		align-items: center;
		justify-content: center;
		width: 36px;
		height: 36px;
	}

	.chart {
		display: block;
		font-family: 'Liberation Sans', Arial, sans-serif;
		font-size: 14px;
	}

	.chart text {
		white-space: pre;
	}

	.gridlines line {
		stroke: #e8e8e8;
		shape-rendering: crispEdges;
	}

	.ticks line {
		stroke: #000;
		stroke-width: 2;
		shape-rendering: crispEdges;
	}

	.frame {
		fill: none;
		stroke: #000;
		shape-rendering: crispEdges;
	}

	.minor {
		font-size: 10px;
	}

	.power {
		font-size: 17px;
	}

	.sup {
		font-size: 12px;
	}

	.sub {
		font-size: 10px;
	}

	.title {
		font-weight: 700;
	}

	.pipe {
		font-weight: 400;
	}

	.green {
		fill: #008000;
	}

	.dark-green {
		fill: #006400;
	}

	.brown {
		fill: #8b2500;
	}

	.red {
		fill: #ff0000;
	}

	.navy {
		fill: #1a3a8a;
	}

	.blue {
		fill: #0000ff;
	}

	.legend-wrap {
		display: flex;
		justify-content: center;
		padding: 16px 36px 0 86px;
	}

	.legend {
		display: flex;
		align-items: center;
		gap: 11px;
		height: 34px;
		padding: 0 5px;
		border: 1px solid #000;
		color: #000;
		font-family: 'Liberation Sans', Arial, sans-serif;
		font-size: 14px;
	}

	.legend span {
		display: flex;
		align-items: center;
		gap: 5px;
		white-space: nowrap;
	}

	footer {
		height: 36px;
		padding-left: 14px;
		background: #003366;
		color: #fff;
		font-size: 16px;
		line-height: 34px;
	}
</style>
